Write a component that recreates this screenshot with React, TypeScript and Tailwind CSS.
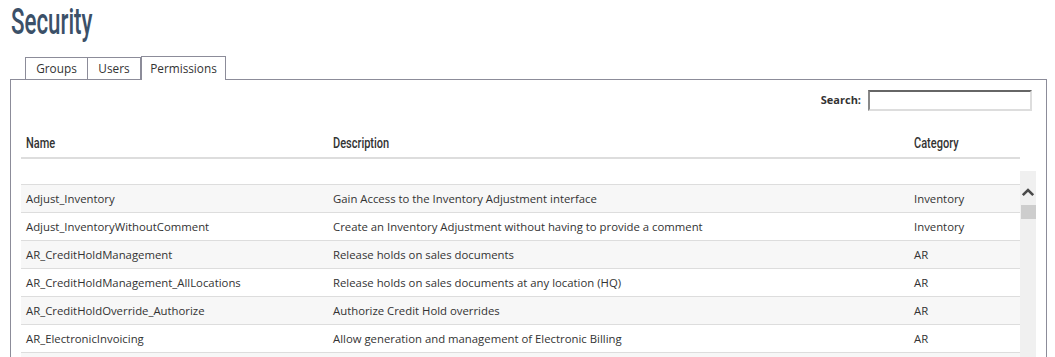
import React from "react";

const rows = [
  ["Adjust_Inventory", "Gain Access to the Inventory Adjustment interface", "Inventory"],
  ["Adjust_InventoryWithoutComment", "Create an Inventory Adjustment without having to provide a comment", "Inventory"],
  ["AR_CreditHoldManagement", "Release holds on sales documents", "AR"],
  ["AR_CreditHoldManagement_AllLocations", "Release holds on sales documents at any location (HQ)", "AR"],
  ["AR_CreditHoldOverride_Authorize", "Authorize Credit Hold overrides", "AR"],
  ["AR_ElectronicInvoicing", "Allow generation and management of Electronic Billing", "AR"],
];

function Head({ children }: { children: React.ReactNode }) {
  return (
    <span className="inline-block origin-left scale-x-[0.71] font-['Roboto',sans-serif] font-medium text-[15.5px] text-[#333] whitespace-nowrap">
      {children}
    </span>
  );
}

export default function App() {
  return (
    <div className="bg-white min-h-screen font-['Open_Sans',sans-serif] text-[11.35px] text-[#333]">
      <div className="pt-[1px] pl-[11px] h-[55px]">
        <h1 className="inline-block origin-left scale-x-[0.62] font-['Roboto',sans-serif] font-medium text-[36px] leading-[42px] text-[#3b5068] whitespace-nowrap">
          Security
        </h1>
      </div>
      <div className="pl-[10px] pr-[8px]">
        <div className="flex items-end pl-[15px] h-[24px] text-[11.8px]">
          <div className="h-[22px] w-[63px] border border-b-0 border-[#8c8c99] flex items-center justify-center">Groups</div>
          <div className="h-[22px] w-[53px] border border-b-0 border-l-0 border-[#8c8c99] flex items-center justify-center">Users</div>
          <div className="h-[24px] w-[85px] border border-b-0 border-[#8c8c99] flex items-start pt-[3px] justify-center bg-white relative top-[1px]">Permissions</div>
        </div>
        <div className="border border-b-0 border-[#8c8c99] h-[300px]">
          <div className="flex justify-end items-center pt-[10px] pr-[14px] gap-[7px]">
            <span className="font-bold text-[11px]">Search:</span>
            <div className="w-[164px] h-[21px] border-2 border-t-[#666] border-l-[#888] border-r-[#ddd] border-b-[#ddd]" />
          </div>
          <div className="pl-[10px] pr-[10px]">
            <div className="mr-[16px] h-[48px] flex items-end pb-[2px] border-b-2 border-[#ddd]">
              <div className="w-[307px] pl-[5px]"><Head>Name</Head></div>
              <div className="w-[581px] pl-[5px]"><Head>Description</Head></div>
              <div className="flex-1 pl-[5px]"><Head>Category</Head></div>
            </div>
            <div className="flex mt-[12px]">
              <div className="flex-1">
                <div className="h-[13px]" />
                {rows.map((r, i) => (
                  <div
                    key={r[0]}
                    className={`flex h-[28px] items-center border-t border-[#ddd] ${i % 2 === 0 ? "bg-[#f7f7f7]" : "bg-white"}`}
                  >
                    <div className="w-[307px] pl-[5px]">{r[0]}</div>
                    <div className="w-[581px] pl-[5px]">{r[1]}</div>
                    <div className="flex-1 pl-[5px]">{r[2]}</div>
                  </div>
                ))}
                <div className="h-[28px] border-t border-[#ddd] bg-[#f7f7f7]" />
              </div>
              <div className="w-[16px] bg-[#f0f0f0] flex flex-col items-center">
                <svg width="14" height="10" viewBox="0 0 14 10" className="mt-[16px]">
                  <path d="M1.8 8.2 L7 3 L12.2 8.2" stroke="#4a4a4a" strokeWidth="2.6" fill="none" />
                </svg>
                <div className="w-[15px] h-[14px] bg-[#cdcdcd] mt-[8px]" />
              </div>
            </div>
          </div>
        </div>
      </div>
    </div>
  );
}
